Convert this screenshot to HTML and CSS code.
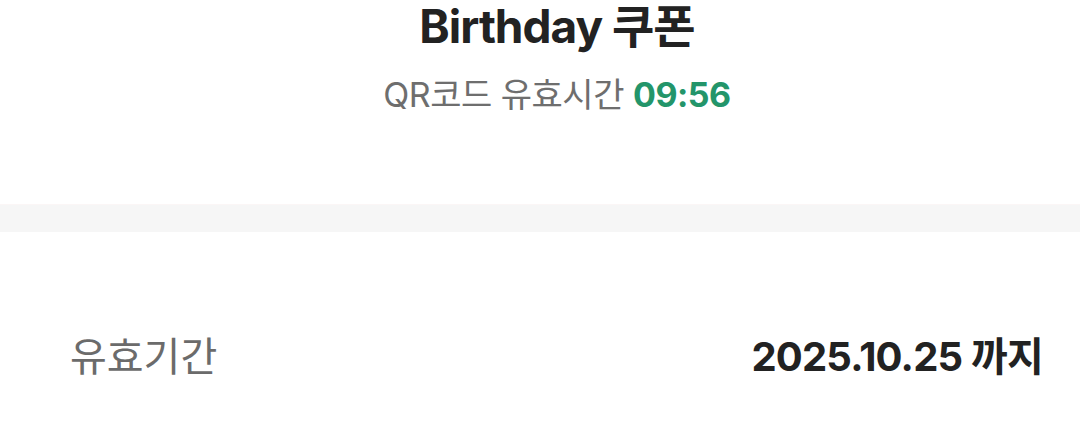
FILE: index.html
```html
<!DOCTYPE html>
<html lang="ko">
<head>
  <meta charset="UTF-8" />
  <meta name="viewport" content="width=device-width, initial-scale=1.0" />
  <title>Birthday 쿠폰</title>
  <link rel="stylesheet" href="styles.css">
</head>
<body>

  <div class="coupon-head">
    <h1>Birthday 쿠폰</h1>
    <p class="qr-time">QR코드 유효시간 <span class="timer">09:56</span></p>
  </div>

  <div class="divider"></div>

  <div class="info-row">
    <span class="info-label">유효기간</span>
    <span class="info-value">2025.10.25 까지</span>
  </div>

</body>
</html>
```

FILE: styles.css
```css
body {
  font-family: Inter, "Noto Sans CJK KR", sans-serif;
  background-color: #fff;
  margin: 0;
  padding: 0;
}
.coupon-head {
  text-align: center;
  height: 204px;
  padding-left: 34px;
}
h1 {
  font-size: 46px;
  font-weight: 700;
  color: #222;
  margin: 0;
  line-height: 52px;
  letter-spacing: -1px;
}
.qr-time {
  font-size: 34px;
  color: #6e6e6e;
  margin: 21px 0 0;
  line-height: 44px;
  letter-spacing: -0.5px;
}
.timer {
  color: #23956a;
  font-weight: 700;
}
.divider {
  height: 27px;
  background-color: #f6f6f6;
  border-top: 1px solid #fbf6f6;
}
.info-row {
  display: flex;
  justify-content: space-between;
  align-items: center;
  padding: 93px 37px 0 70px;
}
.info-label {
  font-size: 40px;
  color: #6b6b6b;
}
.info-value {
  font-size: 40px;
  font-weight: 700;
  color: #222;
  letter-spacing: -0.8px;
}
```
